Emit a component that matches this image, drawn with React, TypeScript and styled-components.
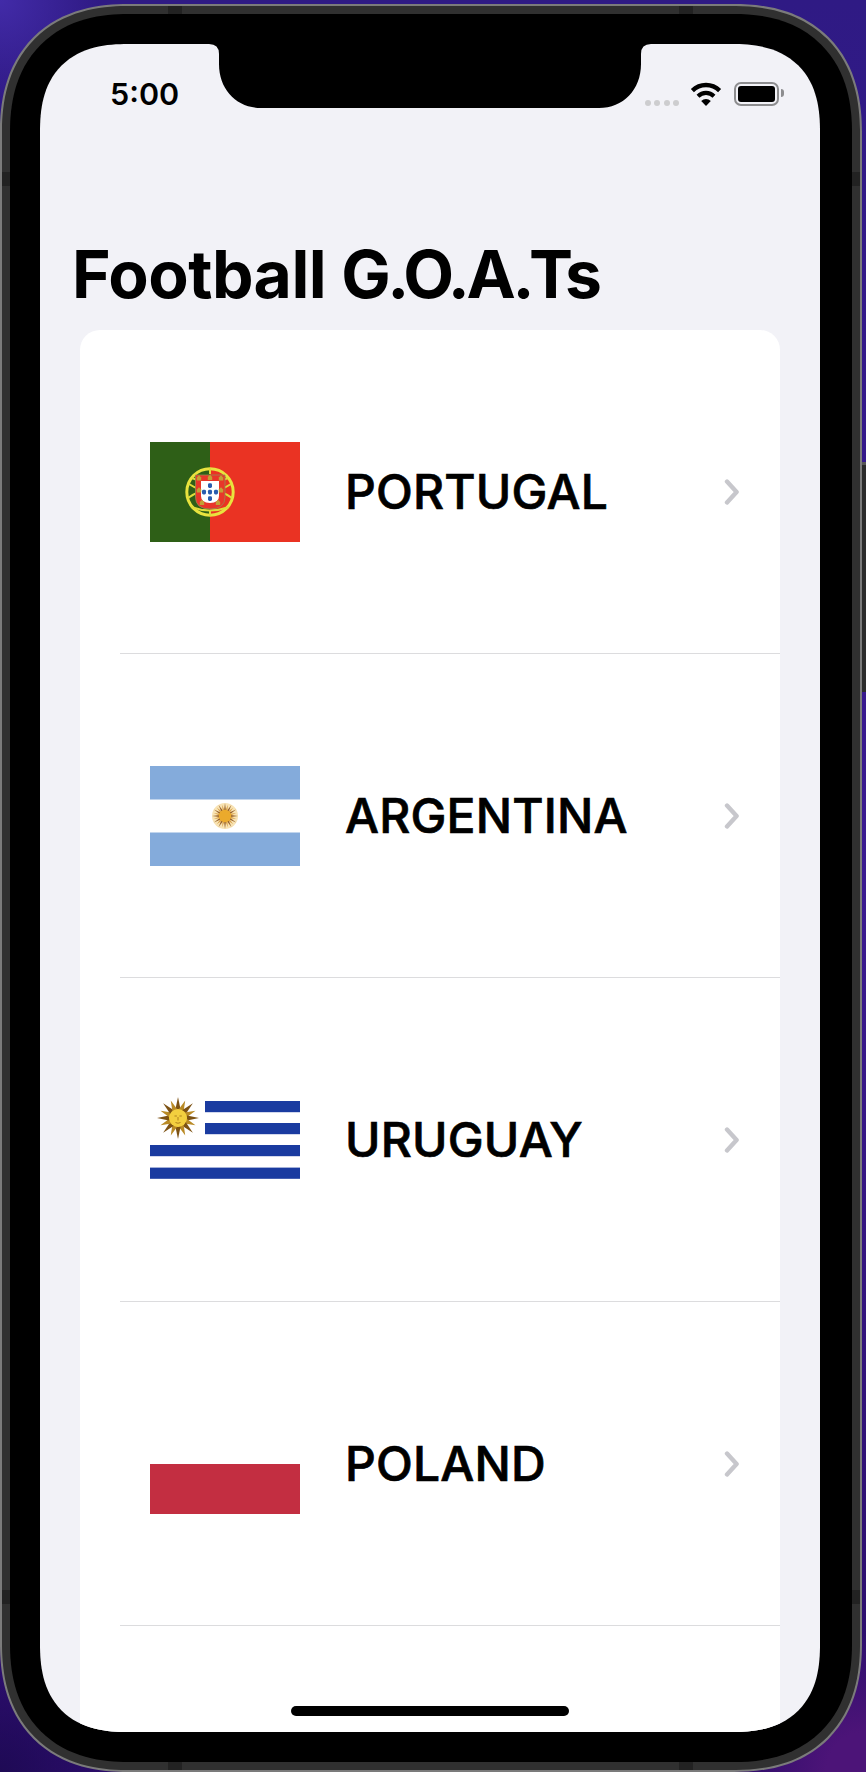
import React from "react";
import styled, { createGlobalStyle, css } from "styled-components";

const Global = createGlobalStyle`
  html, body { margin: 0; padding: 0; width: 866px; height: 1772px; overflow: hidden; }
  #root { width: 866px; height: 1772px; }
  * { box-sizing: border-box; }
`;

const Desktop = styled.div`
  width: 866px;
  height: 1772px;
  padding: 4px 4px 0 0;
  overflow: hidden;
  font-family: Inter, "Liberation Sans", sans-serif;
  color: #000;
  background:
    radial-gradient(circle at 100% 100%, #4c1478 0, #4c1478 40px, rgba(76, 20, 120, 0) 140px),
    radial-gradient(circle at 0 100%, #1e0a55 0, rgba(30, 10, 85, 0) 100px),
    radial-gradient(circle at 0 0, #422ba8 0, rgba(66, 43, 168, 0) 100px),
    linear-gradient(180deg, #2f1a84 0, #35188c 30%, #3a1a90 50%, #2a0c68 100%);
`;

const Device = styled.div`
  position: relative;
  width: 862px;
  height: 1768px;
  padding: 8px;
  border: 2px solid #7b7b7b;
  border-radius: 128px;
  corner-shape: superellipse(1.2);
  background: #303030;
`;

const bandPlacement = {
  topLeft: css`top: -0px; left: 166px; width: 14px; height: 8px;`,
  topRight: css`top: 0; left: 677px; width: 14px; height: 8px;`,
  bottomLeft: css`bottom: 0; left: 166px; width: 14px; height: 8px;`,
  bottomRight: css`bottom: 0; left: 677px; width: 14px; height: 8px;`,
  leftTop: css`left: 0; top: 166px; width: 8px; height: 14px;`,
  rightTop: css`right: 0; top: 166px; width: 8px; height: 14px;`,
  leftBottom: css`left: 0; top: 1584px; width: 8px; height: 14px;`,
  rightBottom: css`right: 0; top: 1584px; width: 8px; height: 14px;`,
};

const Band = styled.i<{ $at: keyof typeof bandPlacement }>`
  position: absolute;
  background: #222;
  ${(p) => bandPlacement[p.$at]}
`;

const SideButton = styled.i`
  position: absolute;
  top: 456px;
  right: -6px;
  width: 4px;
  height: 230px;
  background: #2b2b2b;
  border-top: 3px solid #555;
`;

const Bezel = styled.div`
  height: 100%;
  padding: 30px 32px 30px 30px;
  background: #000;
  border-radius: 118px;
  corner-shape: superellipse(1.2);
`;

const Screen = styled.div`
  position: relative;
  height: 1688px;
  display: flex;
  flex-direction: column;
  overflow: hidden;
  background: #f2f2f7;
  border-radius: 88px;
  corner-shape: superellipse(1.3);
`;

const NotchShape = styled.svg`
  position: absolute;
  top: 0;
  left: 169px;
  display: block;
`;

const StatusBar = styled.div`
  flex: none;
  height: 100px;
  display: flex;
  align-items: center;
  justify-content: space-between;
  padding: 0 41px 0 70px;
`;

const Time = styled.span`
  font-size: 30.5px;
  font-weight: 560;
  line-height: 36px;
`;

const StatusIcons = styled.div`
  display: flex;
  align-items: flex-end;
`;

const SignalDots = styled.div`
  display: flex;
  gap: 3.4px;
  margin-right: 11px;
`;

const SignalDot = styled.i`
  width: 6px;
  height: 6px;
  border-radius: 50%;
  background: #cdcdcf;
`;

const WifiIcon = styled.svg`
  display: block;
  margin-right: 12px;
`;

const Battery = styled.div`
  position: relative;
  width: 45px;
  height: 24px;
  padding: 2px;
  border: 2px solid #8d8d8f;
  border-radius: 7px;

  &::after {
    content: "";
    position: absolute;
    top: 5px;
    right: -7px;
    width: 3px;
    height: 8px;
    border-radius: 0 3px 3px 0;
    background: #8d8d8f;
  }
`;

const BatteryFill = styled.div`
  height: 100%;
  border-radius: 3px;
  background: #000;
`;

const Title = styled.h1`
  flex: none;
  margin: 80px 0 6px;
  padding-left: 32px;
  font-size: 66px;
  line-height: 100px;
  font-weight: 700;
  letter-spacing: -0.55px;
  height: 100px;
`;

const TitleAcronym = styled.span`
  letter-spacing: -3.3px;
`;

const Card = styled.div`
  flex: 1;
  margin: 0 40px;
  overflow: hidden;
  background: #fff;
  border-radius: 20px 20px 0 0;
`;

const Row = styled.div`
  height: 324px;
  margin-left: 40px;
  display: flex;
  align-items: center;
  padding: 0 40px 0 30px;
  border-bottom: 1px solid #dcdcde;
`;

const FlagArt = styled.svg`
  flex: none;
  display: block;
`;

const Country = styled.span`
  flex: 1;
  margin-left: 45px;
  font-size: 48px;
  line-height: 60px;
  font-weight: 500;
  letter-spacing: 0.2px;
  -webkit-text-stroke: 0.7px #000;
`;

const Chevron = styled.svg`
  flex: none;
  display: block;
`;

const HomeIndicator = styled.i`
  position: absolute;
  left: 251px;
  bottom: 16px;
  width: 278px;
  height: 10px;
  border-radius: 5px;
  background: #000;
`;

type SunProps = {
  cx: number;
  cy: number;
  inner: number;
  outer: number;
  rays: number;
  core: string;
  ray: string;
  rayAlt: string;
  width: number;
};

function Sun({ cx, cy, inner, outer, rays, core, ray, rayAlt, width }: SunProps) {
  return (
    <g>
      {Array.from({ length: rays }, (_, i) => {
        const a = (i / rays) * Math.PI * 2 - Math.PI / 2;
        const n = a + Math.PI / 2;
        const w = width / 2;
        const bx = cx + Math.cos(a) * inner;
        const by = cy + Math.sin(a) * inner;
        const tx = cx + Math.cos(a) * (i % 2 ? outer * 0.9 : outer);
        const ty = cy + Math.sin(a) * (i % 2 ? outer * 0.9 : outer);
        const pts = `${bx + Math.cos(n) * w},${by + Math.sin(n) * w} ${tx},${ty} ${bx - Math.cos(n) * w},${by - Math.sin(n) * w}`;
        return <polygon key={i} points={pts} fill={i % 2 ? rayAlt : ray} />;
      })}
      <circle cx={cx} cy={cy} r={inner + 0.6} fill={core} />
    </g>
  );
}

function Portugal() {
  const cx = 60;
  const cy = 50;
  const dots: [number, number][] = [[0, -6.5], [-6, 0], [0, 0], [6, 0], [0, 6.5]];
  const castles: [number, number][] = [[-11, -14], [0, -14.5], [11, -14], [-11, -2], [11, -2], [-8, 10.5], [8, 10.5]];
  return (
    <FlagArt width="150" height="100" viewBox="0 0 150 100">
      <rect width="60" height="100" fill="#2e5f17" />
      <rect x="60" width="90" height="100" fill="#ea3323" />
      <circle cx={cx} cy={cy} r="23.2" fill="none" stroke="#e9e33e" strokeWidth="3" />
      <path d="M39 42 Q60 56 81 42 M38 56 Q60 40 82 56 M42 36 Q60 44 78 36 M41 65 Q60 72 79 65 M60 26 V32 M60 68 V74" fill="none" stroke="#dedc3a" strokeWidth="2" />
      <path d="M45.5 33 H75 V55 Q75 67 60 67 Q45.5 67 45.5 55 Z" fill="#e8362a" stroke="#9a8a50" strokeWidth="0.8" />
      <path d="M51 39 H69 V54 Q69 61 60 61 Q51 61 51 54 Z" fill="#fff" />
      {dots.map(([x, y]) => (
        <rect key={`${x}${y}`} x={cx + x - 2} y={cy + y - 2.2} width="4" height="4.6" rx="1.4" fill="#2a5cae" />
      ))}
      {castles.map(([x, y]) => (
        <path key={`${x}${y}`} d={`M${cx + x - 2.2} ${cy + y + 2.4} v-3 l2.2 -2.2 l2.2 2.2 v3 z`} fill="#c3a035" />
      ))}
    </FlagArt>
  );
}

function Argentina() {
  return (
    <FlagArt width="150" height="100" viewBox="0 0 150 100">
      <rect width="150" height="33.5" fill="#84abdb" />
      <rect y="66.5" width="150" height="33.5" fill="#84abdb" />
      <circle cx="75" cy="50" r="13" fill="#f8e3b4" />
      <Sun cx={75} cy={50} inner={5.6} outer={12.8} rays={24} core="#ebaa2c" ray="#95602a" rayAlt="#d9a047" width={1.9} />
    </FlagArt>
  );
}

function Uruguay() {
  return (
    <FlagArt width="150" height="100" viewBox="0 0 150 100">
      <rect x="55" y="11" width="95" height="11.2" fill="#1a3ba0" />
      <rect x="55" y="33" width="95" height="11.2" fill="#1a3ba0" />
      <rect y="55" width="150" height="11.2" fill="#1a3ba0" />
      <rect y="77.6" width="150" height="11.2" fill="#1a3ba0" />
      <Sun cx={28} cy={28} inner={8} outer={21} rays={16} core="#f3cf3f" ray="#7d5213" rayAlt="#b98a25" width={5.4} />
      <circle cx="28" cy="28" r="9" fill="#f3cf3f" />
      <path d="M24.5 26 h2.4 M29.4 26 h2.4 M28 27 v3.5 M25.5 32.5 q2.5 1.5 5 0" stroke="#a8791c" strokeWidth="0.9" fill="none" />
    </FlagArt>
  );
}

function Poland() {
  return (
    <FlagArt width="150" height="100" viewBox="0 0 150 100">
      <rect y="50" width="150" height="50" fill="#c32e41" />
    </FlagArt>
  );
}

const countries = [
  { name: "PORTUGAL", Flag: Portugal },
  { name: "ARGENTINA", Flag: Argentina },
  { name: "URUGUAY", Flag: Uruguay },
  { name: "POLAND", Flag: Poland },
];

const bands: (keyof typeof bandPlacement)[] = [
  "topLeft", "topRight", "bottomLeft", "bottomRight",
  "leftTop", "rightTop", "leftBottom", "rightBottom",
];

export default function App() {
  return (
    <Desktop>
      <Global />
      <Device>
        {bands.map((b) => (
          <Band key={b} $at={b} />
        ))}
        <SideButton />
        <Bezel>
          <Screen>
            <StatusBar>
              <Time>5:00</Time>
              <StatusIcons>
                <SignalDots>
                  <SignalDot />
                  <SignalDot />
                  <SignalDot />
                  <SignalDot />
                </SignalDots>
                <WifiIcon width="32" height="24" viewBox="0 0 32 24">
                  <path d="M2.4 8.6 A19.5 19.5 0 0 1 29.6 8.6" fill="none" stroke="#000" strokeWidth="4.4" />
                  <path d="M8 14.2 A11.5 11.5 0 0 1 24 14.2" fill="none" stroke="#000" strokeWidth="4.2" />
                  <path d="M11.2 19 A7 7 0 0 1 20.8 19 L16 24 Z" fill="#000" />
                </WifiIcon>
                <Battery>
                  <BatteryFill />
                </Battery>
              </StatusIcons>
            </StatusBar>
            <Title>
              Football <TitleAcronym>G.O.A.Ts</TitleAcronym>
            </Title>
            <Card>
              {countries.map(({ name, Flag }) => (
                <Row key={name}>
                  <Flag />
                  <Country>{name}</Country>
                  <Chevron width="16" height="26" viewBox="0 0 16 26">
                    <path d="M3 2.6 L12.6 13 L3 23.4" fill="none" stroke="#c7c7cc" strokeWidth="4.4" strokeLinecap="round" strokeLinejoin="round" />
                  </Chevron>
                </Row>
              ))}
            </Card>
            <NotchShape width="442" height="64" viewBox="0 0 442 64">
              <path d="M0 0 Q10 0 10 10 L10 20 C10 46 28 64 52 64 L390 64 C414 64 432 46 432 20 L432 10 Q432 0 442 0 Z" fill="#000" />
            </NotchShape>
            <HomeIndicator />
          </Screen>
        </Bezel>
      </Device>
    </Desktop>
  );
}
